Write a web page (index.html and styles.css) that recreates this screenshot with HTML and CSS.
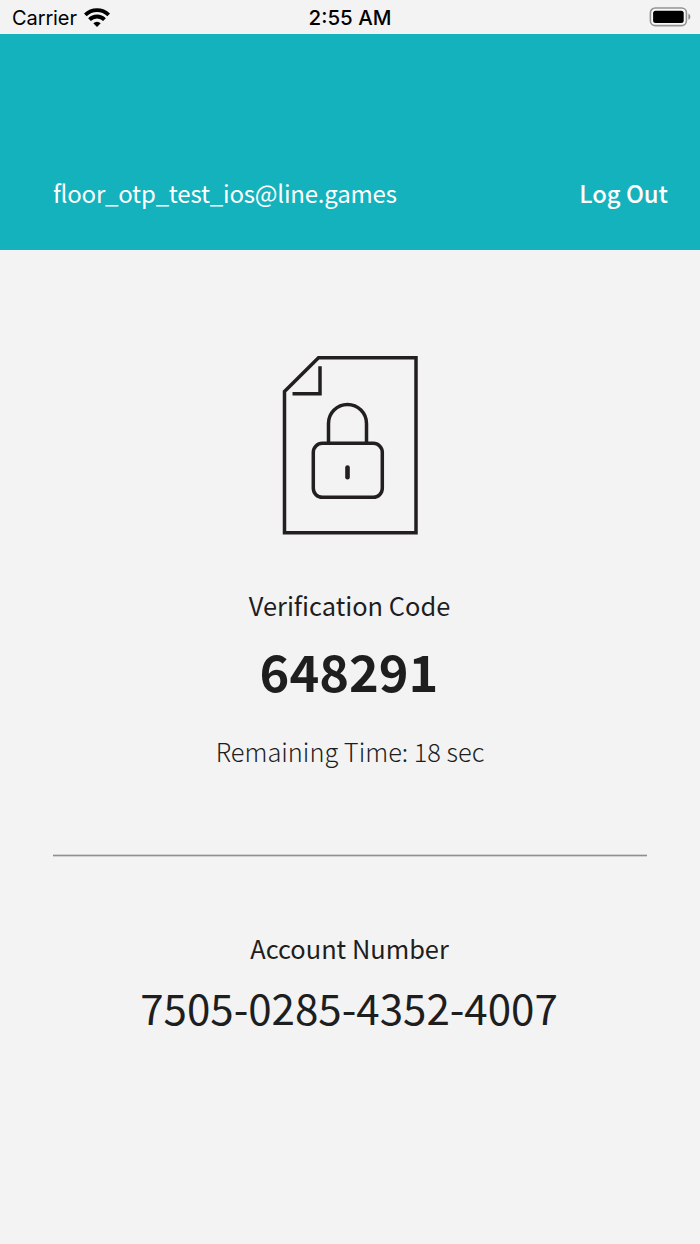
FILE: index.html
```html
<!DOCTYPE html>
<html lang="en">
<head>
<meta charset="utf-8">
<title>Verification Code</title>
<link rel="stylesheet" href="styles.css">
</head>
<body>
<div class="status">
  <div class="carrier"><span>Carrier</span>
    <svg class="wifi" width="26" height="19" viewBox="0 0 26 19" fill="none" stroke="#000" stroke-width="3.8">
      <path d="M1.3 6.9A16.6 16.6 0 0 1 24.7 6.9"/>
      <path d="M5.5 11.6A10.6 10.6 0 0 1 20.5 11.6"/>
      <path d="M13 19L9.3 15.3A5.3 5.3 0 0 1 16.7 15.3Z" fill="#000" stroke="none"/>
    </svg>
  </div>
  <div class="time">2:55 AM</div>
  <div class="power">
    <svg width="42" height="20" viewBox="0 0 42 20">
      <rect x="1.4" y="1" width="36" height="17.6" rx="4.8" fill="#f8f8f8" stroke="#949494" stroke-width="1.6"/>
      <rect x="4.1" y="3.7" width="30.6" height="12.4" rx="2.5"/>
      <path d="M39.4 6.8Q41.4 7.4 41.4 9.8T39.4 12.8Z" fill="#8d8d8d"/>
    </svg>
  </div>
</div>
<header class="header">
  <span class="email">floor_otp_test_ios@line.games</span>
  <span class="logout">Log Out</span>
</header>
<main class="main">
  <svg class="doc" width="136" height="180" viewBox="0 0 136 180" fill="none" stroke="#231f20" stroke-width="3.5">
    <path d="M36.5 2.7H134V177.8H2.5V36.5Z"/>
    <path d="M38 11.3V38.7H10.5"/>
    <path d="M46.5 87.5V68.5A19 19 0 0 1 84.5 68.5V87.5"/>
    <rect x="31.3" y="88.3" width="69" height="54" rx="9"/>
    <path d="M65.5 112.5V122.3" stroke-width="4.6" stroke-linecap="round"/>
  </svg>
  <div class="label verify">Verification Code</div>
  <div class="code">648291</div>
  <div class="remaining">Remaining Time: 18 sec</div>
  <hr class="rule">
  <div class="label account">Account Number</div>
  <div class="number">7505-0285-4352-4007</div>
</main>
</body>
</html>
```
FILE: styles.css
```css
* { box-sizing: border-box; }
body {
  margin: 0;
  height: 1244px;
  background: #f3f3f3;
  color: #1e1e1e;
  font-family: "Noto Sans CJK KR", "Noto Sans CJK JP", sans-serif;
  white-space: nowrap;
}
.status {
  display: grid;
  grid-template-columns: 1fr auto 1fr;
  height: 34px;
  padding: 0 9px;
  align-items: center;
  color: #000;
  font-family: Inter, sans-serif;
  font-size: 20.5px;
  line-height: 34px;
}
.carrier {
  display: flex;
  align-items: center;
  gap: 7px;
  padding: 2px 0 0 3px;
  font-size: 20px;
  letter-spacing: -0.1px;
  line-height: 32px;
}
.wifi { display: block; margin-top: -2px; }
.time { padding-top: 2px; font-weight: 500; line-height: 32px; }
.power { display: flex; justify-content: flex-end; }
.header {
  display: flex;
  justify-content: space-between;
  height: 216px;
  padding: 139px 32px 0 53px;
  background: #14b2bd;
  color: #fff;
  font-size: 24px;
  line-height: 40px;
}
.email { letter-spacing: -0.2px; }
.logout { font-size: 23.8px; font-weight: 500; }
.main {
  display: flex;
  flex-direction: column;
  align-items: center;
  padding-top: 105px;
}
.doc { display: block; }
.label { padding-right: 1px; font-size: 25.4px; line-height: 40px; }
.verify { margin-top: 50px; }
.code { margin-top: 5px; padding-right: 2px; font-size: 50.5px; font-weight: 700; line-height: 80px; }
.remaining { margin-top: 21px; font-size: 25.4px; font-weight: 300; line-height: 40px; }
.rule {
  width: 594px;
  height: 3px;
  margin: 83px 0 0;
  border: solid #d2d2d2;
  border-width: 1px 0;
  background: #8f8f8f;
}
.account { margin-top: 71px; }
.number { margin-top: 4px; padding-right: 2px; font-size: 42.1px; line-height: 70px; }
```
